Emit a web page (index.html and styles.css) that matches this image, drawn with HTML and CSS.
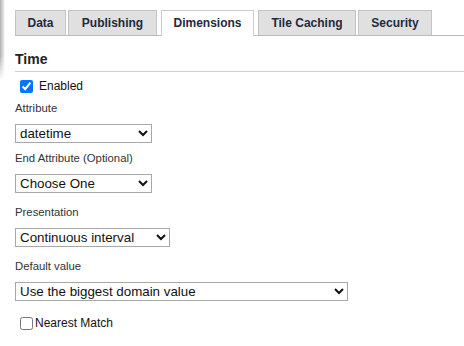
FILE: index.html
```html
<!DOCTYPE html>
<html>
<head>
    <meta charset="UTF-8">
    <title>Layer - Dimensions</title>
    <link rel="stylesheet" href="styles.css">
</head>
<body>
    <!-- left panel shadow -->
    <div class="edge-shadow"></div>

    <div class="page">
        <!-- tabs -->
        <ul class="tabs">
            <li class="tab">Data</li>
            <li class="tab">Publishing</li>
            <li class="tab active">Dimensions</li>
            <li class="tab">Tile Caching</li>
            <li class="tab">Security</li>
        </ul>

        <h2 class="section-title">Time</h2>

        <div class="form">
            <label class="check">
                <input type="checkbox" checked> Enabled
            </label>

            <div class="field first">
                <div class="field-label">Attribute</div>
                <select class="sel sel-attr">
                    <option>datetime</option>
                </select>
            </div>

            <div class="field second">
                <div class="field-label">End Attribute (Optional)</div>
                <select class="sel sel-attr">
                    <option>Choose One</option>
                </select>
            </div>

            <div class="field">
                <div class="field-label">Presentation</div>
                <select class="sel sel-pres">
                    <option>Continuous interval</option>
                </select>
            </div>

            <div class="field">
                <div class="field-label">Default value</div>
                <select class="sel sel-default">
                    <option>Use the biggest domain value</option>
                </select>
            </div>

            <label class="check check-small">
                <input type="checkbox">Nearest Match
            </label>
        </div>
    </div>
</body>
</html>
```

FILE: styles.css
```css
/* page */
body {
    margin: 0;
    background: #fff;
    font-family: "Liberation Sans", Arial, sans-serif;
    color: #222;
    overflow: hidden;
}

/* grey shadow from the panel on the left */
.edge-shadow {
    position: absolute;
    left: 0;
    top: 0;
    width: 5px;
    height: 80px;
    background: linear-gradient(to right, #b0b0b0, #dcdcdc 60%, #fff);
    -webkit-mask-image: linear-gradient(to bottom, #000 70%, transparent);
    mask-image: linear-gradient(to bottom, #000 70%, transparent);
}

.page {
    padding: 10px 0 0 15px;
}

/* tabs */
.tabs {
    list-style: none;
    margin: 0;
    padding: 0;
    display: flex;
    gap: 2px;
    border-bottom: 1px solid #bbb;
    height: 25px;
}

.tab {
    box-sizing: border-box;
    height: 25px;
    padding: 0;
    line-height: 25px;
    text-align: center;
    font-size: 12px;
    font-weight: bold;
    color: #1f2a3c;
    background: #e0e0e0;
    border: 1px solid #c4c4c4;
    border-bottom: none;
}

.tab:nth-child(1) { width: 51px; }
.tab:nth-child(2) { width: 89px; }
.tab:nth-child(3) { width: 93px; margin-left: 2px; }
.tab:nth-child(4) { width: 98px; margin-left: 2px; }
.tab:nth-child(5) { width: 74px; }

.tab.active {
    background: #fff;
    height: 26px;
    border-color: #ccc;
}

/* section title */
.section-title {
    margin: 15px 0 0 0;
    padding-bottom: 4px;
    font-size: 14px;
    font-weight: bold;
    color: #222;
    border-bottom: 1px solid #c5e09b;
}

/* form */
.form {
    padding-top: 7px;
}

.check {
    display: flex;
    align-items: center;
    font-size: 12px;
    color: #111;
}

.check input {
    margin: 0 6px 0 5px;
    width: 13px;
    height: 13px;
}

.check-small input {
    margin-right: 2px;
}

.field-label {
    font-size: 11.33px;
    color: #333;
    margin-top: 13px;
    margin-bottom: 10px;
}

.field.first .field-label {
    margin-top: 9px;
}

.field.second .field-label {
    margin-top: 9px;
}

.sel {
    box-sizing: border-box;
    height: 19px;
    font-family: "Liberation Sans", Arial, sans-serif;
    font-size: 13.33px;
    color: #111;
    background: #fff;
    border: 1px solid #a8a8a8;
    border-radius: 0;
    padding: 0;
    display: block;
}

.sel-attr { width: 137px; }
.sel-pres { width: 155px; }
.sel-default { width: 333px; }

.check-small {
    margin-top: 15px;
}
```
